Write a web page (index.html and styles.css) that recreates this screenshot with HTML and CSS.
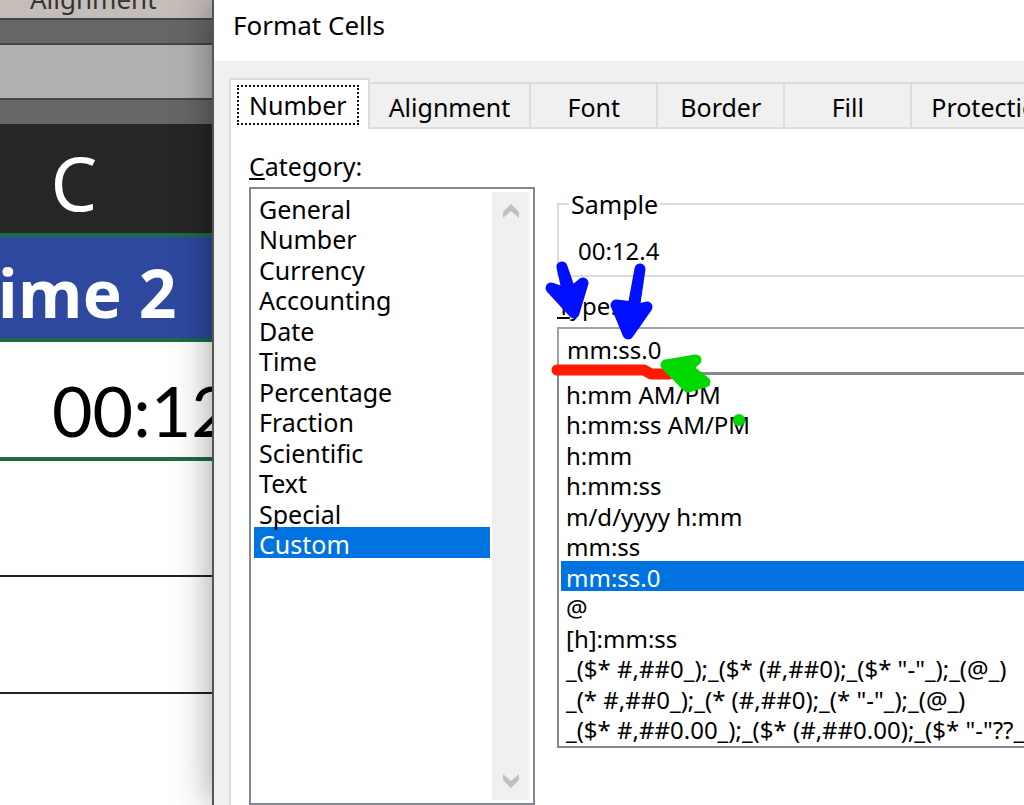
FILE: index.html
```html
<!DOCTYPE html>
<html lang="en">
  <head>
    <meta charset="UTF-8" />
    <meta name="viewport" content="width=device-width, initial-scale=1.0" />
    <title>Format Cells</title>
    <link rel="stylesheet" href="styles.css">
  </head>
  <body>
    <!-- Spreadsheet behind the dialog -->
    <main class="sheet">
      <div class="ribbon">Alignment</div>
      <div class="formula-bar"></div>
      <table class="grid">
        <thead>
          <tr class="col-letter"><th>C</th></tr>
        </thead>
        <tbody>
          <tr class="heading"><th>Time 2</th></tr>
          <tr class="value"><td>00:12</td></tr>
          <tr class="empty"><td></td></tr>
          <tr class="empty"><td></td></tr>
          <tr class="empty"><td></td></tr>
        </tbody>
      </table>
    </main>

    <!-- Format Cells dialog -->
    <section class="dialog">
      <h1 class="title">Format Cells</h1>
      <div class="dialog-body">
        <div class="tabs">
          <button type="button" class="tab active"><span>Number</span></button>
          <button type="button" class="tab">Alignment</button>
          <button type="button" class="tab">Font</button>
          <button type="button" class="tab">Border</button>
          <button type="button" class="tab">Fill</button>
          <button type="button" class="tab">Protection</button>
        </div>

        <form class="panel">
          <div class="category">
            <label for="category"><u>C</u>ategory:</label>
            <div class="category-box">
              <select id="category" class="list" size="12">
                <option>General</option>
                <option>Number</option>
                <option>Currency</option>
                <option>Accounting</option>
                <option>Date</option>
                <option>Time</option>
                <option>Percentage</option>
                <option>Fraction</option>
                <option>Scientific</option>
                <option>Text</option>
                <option>Special</option>
                <option selected>Custom</option>
              </select>
              <div class="scrollbar">
                <button type="button" aria-label="Scroll up">
                  <svg width="18" height="16" viewBox="0 0 18 16"><path d="M1 9 9 1l8 8v6L9 8l-8 7z" /></svg>
                </button>
                <button type="button" aria-label="Scroll down">
                  <svg width="18" height="16" viewBox="0 0 18 16"><path d="M1 1l8 7 8-7v6l-8 8-8-8z" /></svg>
                </button>
              </div>
            </div>
          </div>

          <div class="format">
            <fieldset class="sample">
              <legend>Sample</legend>
              <output>00:12.4</output>
            </fieldset>
            <label for="type"><u>T</u>ype:</label>
            <input type="text" id="type" class="type-input" value="mm:ss.0" />
            <select class="list type-list" size="12" aria-label="Format codes">
              <option>h:mm AM/PM</option>
              <option>h:mm:ss AM/PM</option>
              <option>h:mm</option>
              <option>h:mm:ss</option>
              <option>m/d/yyyy h:mm</option>
              <option>mm:ss</option>
              <option selected>mm:ss.0</option>
              <option>@</option>
              <option>[h]:mm:ss</option>
              <option>_($* #,##0_);_($* (#,##0);_($* "-"_);_(@_)</option>
              <option>_(* #,##0_);_(* (#,##0);_(* "-"_);_(@_)</option>
              <option>_($* #,##0.00_);_($* (#,##0.00);_($* "-"??_);_(@_)</option>
            </select>
          </div>
        </form>
      </div>
    </section>

    <!-- Hand drawn marks -->
    <svg class="marks" width="1024" height="805" viewBox="0 0 1024 805">
      <path class="red" d="M557 370h87l7 4h18" />
      <g class="blue">
        <path d="M562 267l6 27-17-6 23 25 9-30-12 10z" />
        <path d="M640 269l-7 38-17-2 12 29 19-27-13 3z" />
      </g>
      <path class="green" d="M666 365l30-5-9 8 18 14-17 5z" />
      <circle class="dot" cx="739" cy="420" r="6" />
    </svg>
  </body>
</html>
```
FILE: styles.css
```css
* {
  box-sizing: border-box;
}
body {
  margin: 0;
  height: 100vh;
  display: flex;
  overflow: hidden;
  font-family: "Noto Sans", "Open Sans", sans-serif;
  font-size: 25px;
  line-height: 30px;
  color: #000;
  background-color: #fff;
}
button,
input,
select {
  font: inherit;
  color: inherit;
  border: none;
  border-radius: 0;
  outline: none;
}

/* Spreadsheet */
.sheet {
  flex: 0 0 212px;
  overflow: hidden;
}
.ribbon {
  height: 20px;
  padding-left: 30px;
  display: flex;
  align-items: flex-end;
  font-size: 26px;
  line-height: 38px;
  color: #333;
  background-color: #c4bdb8;
  border-bottom: 2px solid #444;
}
.formula-bar {
  height: 104px;
  border: solid #666;
  border-width: 23px 0 24px;
  background-color: #b1b1b1;
  box-shadow: inset 0 2px #444, inset 0 -2px #444;
}
.grid {
  width: 280px;
  margin-left: -66px;
  border-collapse: collapse;
  table-layout: fixed;
  font-family: Lato, sans-serif;
  font-size: 70px;
  line-height: 80px;
}
.grid th,
.grid td {
  padding: 0;
}
.col-letter {
  height: 111px;
  color: #fff;
  background-color: #262626;
}
.col-letter th {
  padding-top: 8px;
  font-family: "Noto Sans", sans-serif;
  font-size: 74px;
  font-weight: 400;
}
.heading {
  height: 105px;
  color: #fff;
  background-color: #2e489f;
  border-top: 4px solid #1e6b45;
  border-bottom: 4px solid #1e6b45;
}
.heading th {
  padding: 8px 12px 0 0;
  font-family: "Open Sans", sans-serif;
  font-size: 66px;
  font-weight: 700;
}
.value {
  height: 119px;
  color: #000;
  border-bottom: 4px solid #1e6b45;
}
.value td {
  padding: 20px 0 0 118px;
}
.empty {
  height: 117px;
  border-bottom: 2px solid #222;
}

/* Dialog */
.dialog {
  position: relative;
  flex: 1;
  min-width: 0;
  margin-right: -80px;
  display: flex;
  flex-direction: column;
  border-left: 2px solid #555;
  background-color: #fff;
  box-shadow: 0 0 36px rgba(0, 0, 0, 0.4);
}
.title {
  height: 61px;
  margin: 0;
  padding: 10px 19px;
  font-size: 26px;
  font-weight: 400;
}
.dialog-body {
  flex: 1;
  min-height: 0;
  display: flex;
  flex-direction: column;
  padding: 17px 0 0 15px;
  background-color: #f0f0f0;
}
.tabs {
  display: flex;
  align-items: flex-end;
}
.tab {
  height: 47px;
  min-width: 127px;
  padding: 2px 19px 0;
  flex: none;
  background-color: #f0f0f0;
  border: solid #dcdcdc;
  border-width: 2px 2px 2px 0;
}
.tabs::after {
  content: "";
  flex: 1;
  border-bottom: 2px solid #dcdcdc;
}
.tab.active {
  height: 51px;
  padding: 0 9px 0 6px;
  background-color: #fff;
  border-width: 2px 2px 0;
}
.tab.active span {
  display: block;
  padding: 3px 10px;
  border: 2px dotted #111;
}
.panel {
  flex: 1;
  min-height: 0;
  display: flex;
  gap: 22px;
  padding: 22px 0 0 18px;
  background-color: #fff;
  border-left: 2px solid #dcdcdc;
}
.category {
  flex: 0 0 286px;
  display: flex;
  flex-direction: column;
  gap: 6px;
}
.category-box {
  flex: 1;
  min-height: 0;
  display: flex;
  padding: 3px;
  border: 2px solid #828790;
}
.list {
  display: block;
  padding: 0;
  overflow: hidden;
  background-color: #fff;
}
.category-box .list {
  flex: 1;
}
.list option {
  height: 30px;
  min-height: 0;
  padding: 0 5px;
  overflow: visible;
}
.list option:nth-child(even) {
  height: 31px;
}
.list option:checked {
  background: linear-gradient(#0073e0, #0073e0);
  -webkit-text-fill-color: #fff;
}
.scrollbar {
  width: 37px;
  display: flex;
  flex-direction: column;
  justify-content: space-between;
  margin-right: 1px;
  margin-left: 2px;
  background-color: #f0f0f0;
}
.scrollbar button {
  height: 38px;
  padding: 0;
  background: none;
}
.scrollbar svg {
  display: block;
  margin: auto;
  fill: #bfbfbf;
}
.format {
  flex: 1;
  min-width: 0;
  font-size: 24px;
}
.format label {
  display: block;
  margin: 14px 0 6px;
}
.sample {
  height: 88px;
  margin: 38px 0 0;
  padding: 17px 19px 0;
  border: 2px solid #dcdcdc;
}
.sample legend {
  margin-left: -9px;
  padding: 0 2px;
  font-size: 25px;
}
.sample output {
  display: block;
}
.type-input {
  display: block;
  width: 100%;
  height: 45px;
  padding: 0 8px 3px;
  border: 2px solid #a0a0a6;
  border-bottom: none;
}
.type-list {
  width: 100%;
  height: 376px;
  padding: 3px 2px;
  border: 2px solid #828790;
  border-top-width: 3px;
}

/* Marks */
.marks {
  position: absolute;
  top: 0;
  left: 0;
  pointer-events: none;
  stroke-linejoin: round;
  stroke-linecap: round;
}
.red {
  fill: none;
  stroke: #ff1a00;
  stroke-width: 11px;
}
.blue {
  fill: #0010ff;
  stroke: #0010ff;
  stroke-width: 11px;
}
.green {
  fill: #00d800;
  stroke: #00d800;
  stroke-width: 11px;
}
.dot {
  fill: #00d800;
}
```
